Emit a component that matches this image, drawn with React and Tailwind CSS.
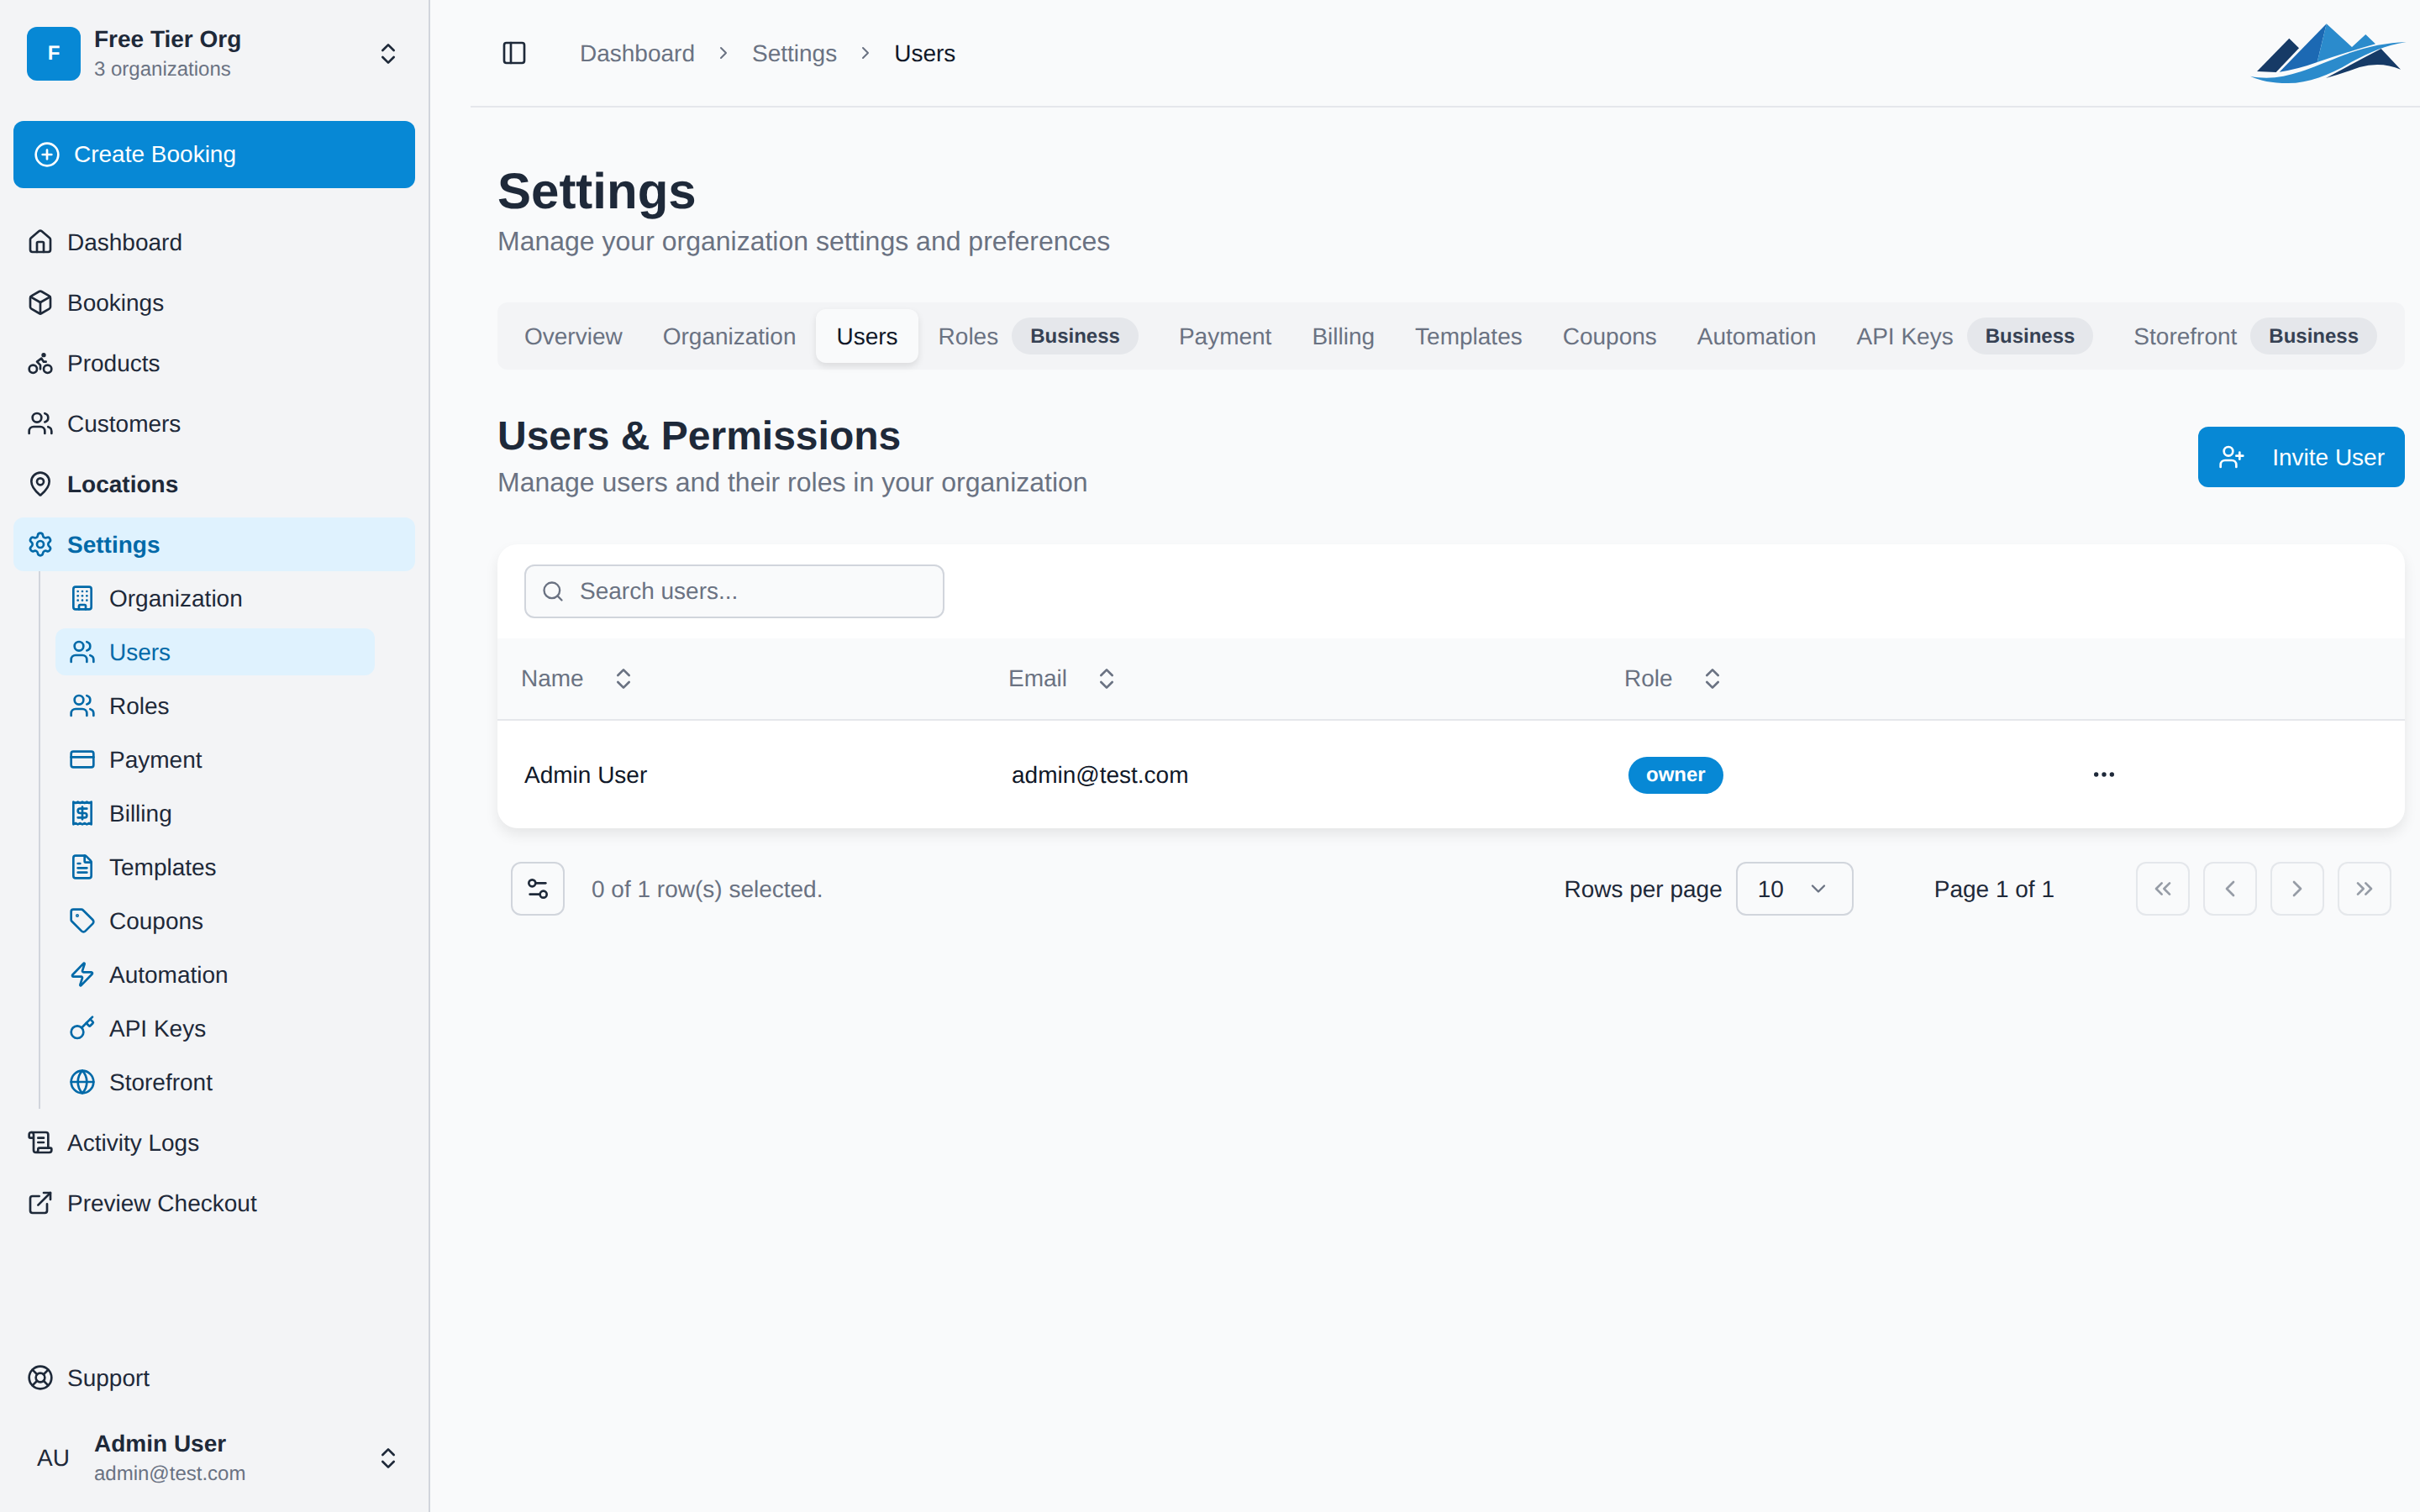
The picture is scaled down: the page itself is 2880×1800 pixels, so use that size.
import React from "react";
import {
  House, Box, Bike, Users, MapPin, Settings, Building, CreditCard, Receipt, FileText, Tag, Zap, Key,
  Globe, ScrollText, ExternalLink, LifeBuoy, ChevronsUpDown, PanelLeft, ChevronRight, Search, UserPlus,
  Ellipsis, Settings2, ChevronDown, ChevronsLeft, ChevronLeft, ChevronsRight, CirclePlus,
} from "lucide-react";

const topNav = [
  { label: "Dashboard", icon: House },
  { label: "Bookings", icon: Box },
  { label: "Products", icon: Bike },
  { label: "Customers", icon: Users },
  { label: "Locations", icon: MapPin, bold: true },
];

const subNav = [
  { label: "Organization", icon: Building },
  { label: "Users", icon: Users, active: true },
  { label: "Roles", icon: Users },
  { label: "Payment", icon: CreditCard },
  { label: "Billing", icon: Receipt },
  { label: "Templates", icon: FileText },
  { label: "Coupons", icon: Tag },
  { label: "Automation", icon: Zap },
  { label: "API Keys", icon: Key },
  { label: "Storefront", icon: Globe },
];

const tabs = [
  { label: "Overview" },
  { label: "Organization" },
  { label: "Users", active: true },
  { label: "Roles", badge: true },
  { label: "Payment" },
  { label: "Billing" },
  { label: "Templates" },
  { label: "Coupons" },
  { label: "Automation" },
  { label: "API Keys", badge: true },
  { label: "Storefront", badge: true },
];

function NavItem({ item }) {
  const Icon = item.icon;
  return (
    <a className={`flex h-16 items-center gap-4 rounded-xl px-[16px] text-[28px] text-gray-800 ${item.bold ? "font-bold" : ""}`}>
      <Icon className="size-8 shrink-0" strokeWidth={2} />
      <span className="pt-0.5">{item.label}</span>
    </a>
  );
}

function SubItem({ item }) {
  const Icon = item.icon;
  return (
    <div className="flex h-16 items-center">
      <a className={`flex h-14 w-[380px] items-center gap-4 rounded-xl px-[16px] text-[28px] ${item.active ? "bg-sky-100 text-sky-700" : "text-gray-800"}`}>
        <Icon className="size-8 shrink-0 text-sky-700" strokeWidth={2} />
        <span className="pt-px">{item.label}</span>
      </a>
    </div>
  );
}

function Logo() {
  return (
    <svg viewBox="0 0 190 76" className="mt-[2px] h-[76px] w-[190px]">
      <path d="M8 59 L46.3 19.7 L58 31.3 L30.7 60 Z" fill="#163a66" />
      <path d="M34.7 59.7 L90.7 2.3 L79.7 48 Q58 56 34.7 59.7 Z" fill="#1c69b3" />
      <path d="M90.7 2.3 L121 30 L137.3 15 L149 26.3 Q115 36 79.7 48 Z" fill="#2b8bcc" />
      <path d="M155.7 32 L179 56.7 Q156 47 130 54 Q108 62 90 67 Q125 48 155.7 32 Z" fill="#163a66" />
      <path d="M0 64.7 C35 72 65 58 105 42 C135 30 160 25 185.7 24 C160 28 143 36 120 48 C95 63 70 73 45 73 C25 73 12 70 0 64.7 Z" fill="#2b8bcc" />
    </svg>
  );
}

function Tab({ tab }) {
  return (
    <div className="flex items-center">
      <div className={`flex h-16 items-center whitespace-nowrap rounded-xl px-6 ${tab.active ? "bg-[#f9fafb] text-gray-900 shadow-[0_4px_8px_rgba(0,0,0,0.1)]" : "text-gray-500"}`}>
        <span className="pt-px">{tab.label}</span>
        {tab.badge && (
          <span className="ml-4 flex h-11 items-center rounded-full bg-gray-200 px-[22px] pt-0.5 text-[24px] font-bold text-gray-700">Business</span>
        )}
      </div>
    </div>
  );
}

function PageButton({ icon: Icon }) {
  return (
    <button className="flex size-16 items-center justify-center rounded-xl border-2 border-gray-300 opacity-50">
      <Icon className="size-8 text-gray-700" />
    </button>
  );
}

function SortHead({ label, className }) {
  return (
    <div className={`flex items-center text-[28px] text-gray-500 ${className}`}>
      <span>{label}</span>
      <ChevronsUpDown className="ml-[31px] size-8 text-gray-500" />
    </div>
  );
}

export default function App() {
  return (
    <div className="flex h-screen w-full overflow-hidden bg-[#f9fafb] font-['Liberation_Sans',Arial,sans-serif] text-gray-800 [text-rendering:geometricPrecision]">
      {/* Sidebar */}
      <aside className="flex w-[512px] shrink-0 flex-col border-r-2 border-gray-300 bg-gray-100 px-4 pb-6 pt-8">
        <div className="flex h-16 items-center pl-4 pr-4">
          <div className="flex size-16 shrink-0 items-center justify-center rounded-xl bg-[#0788d5] text-[24px] font-bold text-white">F</div>
          <div className="ml-[16px] flex-1">
            <div className="text-[28px] font-bold leading-[34px]">Free Tier Org</div>
            <div className="mt-[3px] text-[24px] leading-[32px] text-gray-500">3 organizations</div>
          </div>
          <ChevronsUpDown className="size-8 shrink-0" />
        </div>

        <button className="mt-12 flex h-20 w-full shrink-0 items-center gap-4 rounded-xl bg-[#0788d5] px-6 text-[28px] text-white">
          <CirclePlus className="size-8" />
          <span>Create Booking</span>
        </button>

        <nav className="mt-8 flex flex-col gap-2">
          {topNav.map((item) => (
            <NavItem key={item.label} item={item} />
          ))}
          <div>
            <a className="flex h-16 items-center gap-4 rounded-xl bg-sky-100 px-[16px] text-[28px] font-bold text-sky-700">
              <Settings className="size-8" />
              <span className="pt-0.5">Settings</span>
            </a>
            <div className="ml-[30px] border-l-2 border-gray-300 pl-[18px]">
              {subNav.map((item) => (
                <SubItem key={item.label} item={item} />
              ))}
            </div>
          </div>
          <NavItem item={{ label: "Activity Logs", icon: ScrollText }} />
          <NavItem item={{ label: "Preview Checkout", icon: ExternalLink }} />
        </nav>

        <div className="mt-auto">
          <NavItem item={{ label: "Support", icon: LifeBuoy }} />
          <div className="mt-6 flex h-20 items-center pl-[28px] pr-4">
            <div className="w-[52px] text-left text-[28px]">AU</div>
            <div className="ml-[16px] flex-1">
              <div className="text-[28px] font-bold leading-[34px]">Admin User</div>
              <div className="mt-[3px] text-[24px] leading-[32px] text-gray-500">admin@test.com</div>
            </div>
            <ChevronsUpDown className="size-8" />
          </div>
        </div>
      </aside>

      {/* Main */}
      <main className="min-w-0 flex-1 pl-12">
        <header className="flex h-[128px] items-center justify-between border-b-2 border-gray-200 pl-[36px] pr-[12px]">
          <div className="flex items-center text-[28px]">
            <PanelLeft className="size-8" />
            <span className="ml-[62px] pt-0.5 text-gray-500">Dashboard</span>
            <ChevronRight className="mx-[22px] size-6 text-gray-500" />
            <span className="pt-0.5 text-gray-500">Settings</span>
            <ChevronRight className="mx-[22px] size-6 text-gray-500" />
            <span className="pt-0.5 text-gray-900">Users</span>
          </div>
          <Logo />
        </header>

        <div className="pl-8 pr-[18px] pt-[66px]">
          <h1 className="text-[60px] font-bold leading-[68px] text-gray-800">Settings</h1>
          <p className="pt-px text-[32px] leading-[48px] text-gray-500">Manage your organization settings and preferences</p>

          <div className="mt-[49px] flex h-20 items-center rounded-xl bg-gray-100 px-2 text-[28px]">
            {tabs.map((tab) => (
              <Tab key={tab.label} tab={tab} />
            ))}
          </div>

          <div className="mt-[52px] flex items-start justify-between">
            <div>
              <h2 className="text-[48px] font-bold leading-[56px] text-gray-800">Users &amp; Permissions</h2>
              <p className="mt-[2px] text-[32px] leading-[48px] text-gray-500">Manage users and their roles in your organization</p>
            </div>
            <button className="mt-[16px] flex h-[72px] items-center gap-8 rounded-xl bg-[#0788d5] px-6 text-[28px] text-white">
              <UserPlus className="size-8" />
              <span className="pt-0.5">Invite User</span>
            </button>
          </div>

          <div className="mt-[50px] overflow-hidden rounded-3xl bg-white shadow-[0_8px_16px_rgba(0,0,0,0.08)]">
            <div className="flex h-[112px] items-center px-8">
              <div className="flex h-16 w-[500px] items-center gap-[18px] rounded-xl border-2 border-gray-300 bg-[#f9fafb] pl-[18px] pr-[22px] text-[28px] text-gray-500">
                <Search className="size-7" />
                <span>Search users...</span>
              </div>
            </div>
            <div className="grid h-[98px] grid-cols-[608px_733px_1fr] items-center border-b-2 border-gray-200 bg-[#f9fafb]">
              <SortHead label="Name" className="pl-7" />
              <SortHead label="Email" className="" />
              <SortHead label="Role" className="" />
            </div>
            <div className="grid h-[128px] grid-cols-[608px_733px_555px_1fr] items-center text-[28px] text-gray-900">
              <div className="pl-8 pt-0.5">Admin User</div>
              <div className="pl-1 pt-0.5">admin@test.com</div>
              <div className="pl-[5px]">
                <span className="inline-flex h-11 items-center rounded-full bg-[#0788d5] px-[21px] text-[24px] font-bold text-white">owner</span>
              </div>
              <div>
                <Ellipsis className="size-8 text-gray-800" />
              </div>
            </div>
          </div>

          <div className="mt-[40px] flex items-center pl-[16px] pr-[16px] text-[28px]">
            <button className="flex size-16 items-center justify-center rounded-xl border-2 border-gray-300">
              <Settings2 className="size-8" />
            </button>
            <span className="ml-8 pt-0.5 text-gray-500">0 of 1 row(s) selected.</span>
            <div className="ml-auto flex items-center">
              <span className="pt-0.5 text-gray-800">Rows per page</span>
              <div className="ml-4 flex h-16 w-[140px] items-center justify-between rounded-xl border-2 border-gray-300 pl-6 pr-[26px]">
                <span className="pt-0.5">10</span>
                <ChevronDown className="size-7 text-gray-500" />
              </div>
              <span className="ml-[96px] pt-0.5 text-gray-800">Page 1 of 1</span>
              <div className="ml-[97px] flex gap-4">
                <PageButton icon={ChevronsLeft} />
                <PageButton icon={ChevronLeft} />
                <PageButton icon={ChevronRight} />
                <PageButton icon={ChevronsRight} />
              </div>
            </div>
          </div>
        </div>
      </main>
    </div>
  );
}
